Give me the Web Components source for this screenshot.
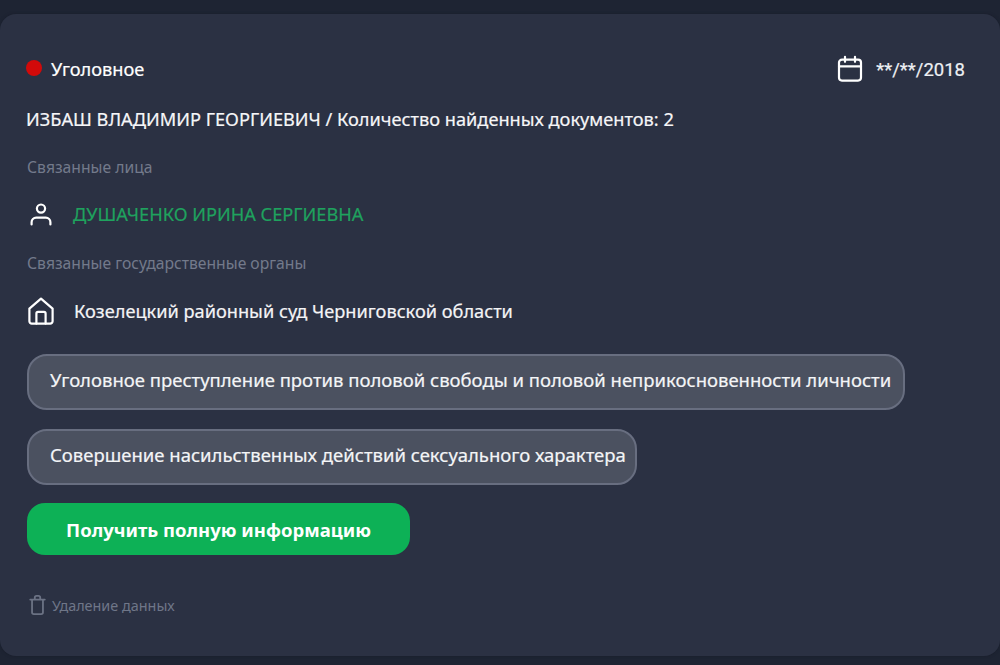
<!DOCTYPE html>
<html lang="ru">
<head>
<meta charset="utf-8">
<title>Карточка дела</title>
<style>
  html, body { margin: 0; height: 665px; overflow: hidden; background: #1e2433; }
  body { font-family: "Noto Sans", sans-serif; }
</style>
</head>
<body>
<case-card>
  <div slot="status">Уголовное</div>
  <div slot="date">**/**/2018</div>
  <div slot="title">ИЗБАШ ВЛАДИМИР ГЕОРГИЕВИЧ / Количество найденных документов: 2</div>

  <section-label>Связанные лица</section-label>
  <icon-row icon="person" green>ДУШАЧЕНКО ИРИНА СЕРГИЕВНА</icon-row>
  <section-label second>Связанные государственные органы</section-label>
  <icon-row icon="house">Козелецкий районный суд Черниговской области</icon-row>

  <case-tag>Уголовное преступление против половой свободы и половой неприкосновенности личности</case-tag>
  <case-tag>Совершение насильственных действий сексуального характера</case-tag>

  <get-button>Получить полную информацию</get-button>
  <delete-link>Удаление данных</delete-link>
</case-card>

<script>
const icons = {
  person: `<svg width="28" height="28" viewBox="0 0 28 28" fill="none" stroke="#fff" stroke-width="2.2" stroke-linecap="round" stroke-linejoin="round"><circle cx="14" cy="8.6" r="4.1"/><path d="M4.6 24.5v-2.3a4.6 4.6 0 0 1 4.6-4.6h9.6a4.6 4.6 0 0 1 4.6 4.6v2.3"/></svg>`,
  house: `<svg width="28" height="30" viewBox="0 0 28 30" fill="none" stroke="#fff" stroke-width="2.2" stroke-linecap="round" stroke-linejoin="round"><path d="M2.4 12.6 14 2.6l11.6 10v12.6a2.4 2.4 0 0 1-2.4 2.4H4.8a2.4 2.4 0 0 1-2.4-2.4z"/><path d="M9.4 27.6V17.4a1.6 1.6 0 0 1 1.6-1.6h6a1.6 1.6 0 0 1 1.6 1.6v10.2"/></svg>`
};

class CaseCard extends HTMLElement {
  constructor() {
    super();
    this.attachShadow({ mode: "open" });
    this.shadowRoot.innerHTML = `
    <style>
      :host {
        display: block;
        box-sizing: border-box;
        height: 642px;
        margin-top: 14px;
        padding: 41px 35px 0 27px;
        background: #2b3143;
        border-radius: 16px;
        color: #fff;
        box-shadow: 0 0 3px #181d2a;
        -webkit-text-stroke: .2px;
      }
      .top { display: flex; justify-content: space-between; align-items: center; height: 28px; }
      .status { display: flex; align-items: center; gap: 9px; font-size: 18.2px; margin-left: -1px; }
      .dot { width: 16px; height: 16px; border-radius: 50%; background: #d20a0a; margin-top: -2px; }
      .date { display: flex; align-items: center; gap: 13px; font: 18.5px Roboto, sans-serif; color: #eef0f3; }
      .date slot { display: block; padding-top: 1px; }
      .title { font-size: 18.2px; line-height: 24px; margin: 24px 0 0 -1px; color: #f6f6f8; }
    </style>
    <div class="top">
      <div class="status"><span class="dot"></span><slot name="status"></slot></div>
      <div class="date">
        <svg width="26" height="28" viewBox="0 0 26 28" fill="none" stroke="#fff" stroke-width="2.2" stroke-linecap="round" stroke-linejoin="round"><rect x="2" y="4.6" width="22" height="21" rx="3"/><path d="M2 11.4h22M8 1.8v5M18 1.8v5"/></svg>
        <slot name="date"></slot>
      </div>
    </div>
    <div class="title"><slot name="title"></slot></div>
    <slot></slot>`;
  }
}

class SectionLabel extends HTMLElement {
  constructor() {
    super();
    this.attachShadow({ mode: "open" });
    this.shadowRoot.innerHTML = `
    <style>
      :host { display: block; font-size: 15.7px; line-height: 20px; color: #737a8b; margin-top: 26px; -webkit-text-stroke: 0; }
      :host([second]) { margin-top: 24px; }
    </style>
    <slot></slot>`;
  }
}

class IconRow extends HTMLElement {
  constructor() {
    super();
    this.attachShadow({ mode: "open" });
    const icon = this.getAttribute("icon");
    this.shadowRoot.innerHTML = `
    <style>
      :host { display: flex; align-items: center; gap: 19px; height: 30px; margin-top: 23px; font-size: 18.2px; color: #f4f4f6; }
      :host([green]) { color: #1fa25e; gap: 18px; margin-top: 22px; }
      svg { display: block; flex: none; }
    </style>
    ${icons[icon]}
    <slot></slot>`;
  }
}

class CaseTag extends HTMLElement {
  constructor() {
    super();
    this.attachShadow({ mode: "open" });
    this.shadowRoot.innerHTML = `
    <style>
      :host {
        display: block;
        width: fit-content;
        box-sizing: border-box;
        height: 56px;
        margin-top: 19px;
        padding: 0 9px 0 21px;
        line-height: 48px;
        font-size: 18.5px;
        color: #f4f5f7;
        background: #4b5160;
        border: 2px solid #686e80;
        border-radius: 20px;
        white-space: nowrap;
      }
      :host(:first-of-type) { margin-top: 28px; padding-right: 12px; }
    </style>
    <slot></slot>`;
  }
}

class GetButton extends HTMLElement {
  constructor() {
    super();
    this.attachShadow({ mode: "open" });
    this.shadowRoot.innerHTML = `
    <style>
      :host {
        display: flex;
        align-items: center;
        justify-content: center;
        width: 383px;
        height: 52px;
        margin-top: 18px;
        background: #0db156;
        border-radius: 18px;
        color: #fff;
        font-size: 18.5px;
        font-weight: 700;
        -webkit-text-stroke: 0;
      }
    </style>
    <slot></slot>`;
  }
}

class DeleteLink extends HTMLElement {
  constructor() {
    super();
    this.attachShadow({ mode: "open" });
    this.shadowRoot.innerHTML = `
    <style>
      :host { display: flex; align-items: center; gap: 6px; margin-top: 38px; padding-left: 2px; height: 24px; font-size: 14.4px; color: #6f7688; -webkit-text-stroke: 0; }
      svg { display: block; }
    </style>
    <svg width="17" height="20" viewBox="0 0 18 22" fill="none" stroke="#6b7284" stroke-width="2" stroke-linecap="round" stroke-linejoin="round"><path d="M1 5h16M3 5v14a2 2 0 0 0 2 2h8a2 2 0 0 0 2-2V5M6 5V3a2 2 0 0 1 2-2h2a2 2 0 0 1 2 2v2"/></svg>
    <slot></slot>`;
  }
}

customElements.define("case-card", CaseCard);
customElements.define("section-label", SectionLabel);
customElements.define("icon-row", IconRow);
customElements.define("case-tag", CaseTag);
customElements.define("get-button", GetButton);
customElements.define("delete-link", DeleteLink);
</script>
</body>
</html>
